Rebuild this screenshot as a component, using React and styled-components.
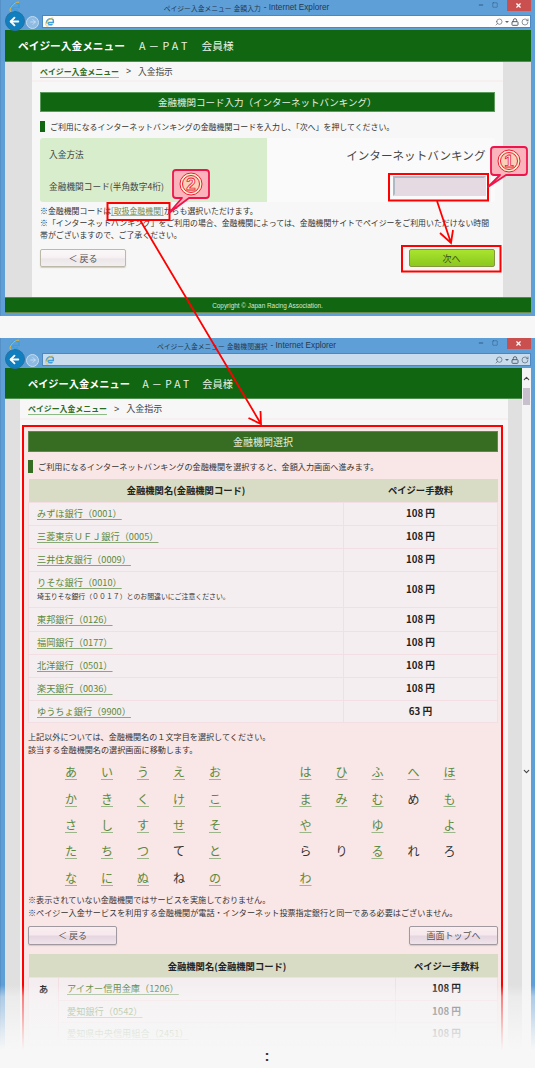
import React from "react";
import styled, { createGlobalStyle } from "styled-components";
import { Search, Lock, RotateCw, ChevronUp, ChevronDown, Minus, Square, X, ArrowLeft, ArrowRight } from "lucide-react";

const Global = createGlobalStyle`
  html, body { margin: 0; padding: 0; background: #f7f7f7; }
  * { box-sizing: border-box; }
  body { font-family: "Noto Sans CJK JP", "Liberation Sans", sans-serif; color: #333; }
`;
const LATIN = `"Liberation Sans", "Noto Sans CJK JP", sans-serif`;

const Page = styled.div`
  position: relative; width: 535px; height: 1068px; overflow: hidden; background: #f7f7f7;
`;
const Win = styled.section`
  background: #5f9fd7;
  margin-top: ${p => p.$top}px;
  height: ${p => p.$h}px;
  padding: 0 4.5px ${p => p.$pb}px;
  display: flex; flex-direction: column; overflow: hidden;
  box-shadow: inset 1px 0 0 #5590c6;
`;
const TitleBar = styled.div`
  height: 15px; position: relative; flex: none; display: flex; align-items: center; justify-content: center; gap: 3px;
  padding-right: 42px; font-size: 8.2px; color: #26394d; font-family: ${LATIN};
`;
const TitleJa = styled.span`font-size: 6.8px;`;
const IeTitle = styled.span`position: absolute; left: 4px; top: 1px; line-height: 0;`;
const Controls = styled.div`
  position: absolute; right: 0; top: 0; display: flex; align-items: flex-start; color: #25476a; gap: 6px;
`;
const CtlIcon = styled.span`width: 8px; height: 10px; display: flex; align-items: center; justify-content: center;`;
const Close = styled.span`
  width: 24px; height: 11px; background: #c9504f; color: #fff; display: flex; align-items: center; justify-content: center; margin-left: 2px;
`;
const AddrRow = styled.div`
  height: 15px; flex: none; display: flex; align-items: flex-start; position: relative; padding-left: 37.5px;
`;
const Back = styled.span`
  position: absolute; left: 0px; top: -4px; width: 20px; height: 20px; border-radius: 50%;
  background: #0f7fbf; border: 1px solid #2b6f9f; color: #fff; display: flex; align-items: center; justify-content: center; z-index: 2;
`;
const Fwd = styled.span`
  position: absolute; left: 21.5px; top: 0.5px; width: 13px; height: 13px; border-radius: 50%;
  background: #8dbbe3; border: 1px solid #c3dcf0; color: #dcecf8; display: flex; align-items: center; justify-content: center;
`;
const Addr = styled.div`
  flex: 1; height: 13px; background: ${p => p.$bg}; border: 1px solid #4d87bd; display: flex; align-items: center;
  padding: 0 1px 0 2px; gap: 2px; color: #58646f;
`;
const Spacer = styled.span`flex: 1;`;
const Caret = styled.span`width: 0; height: 0; border: 2px solid transparent; border-top: 2.5px solid #58646f; margin-top: 2px;`;

const Header = styled.header`
  flex: none; height: ${p => p.$h}px; background: #116611; color: #fff; display: flex; align-items: center;
  padding-left: ${p => p.$pad}px; font-size: ${p => p.$fs}px; border-bottom: 1px solid #4d8f4d;
`;
const Brand = styled.b`font-weight: 700; margin-right: ${p => p.$mr}px;`;
const Pat = styled.span`letter-spacing: ${p => p.$ls}px; margin-right: ${p => p.$mr}px; color: #e8f2e8;`;
const Member = styled.span`color: #e8f2e8;`;

const Gutter = styled.div`
  flex: 1; min-height: 0; background: #e0e0e0; padding: 0 ${p => p.$r}px 0 ${p => p.$l}px; display: flex;
`;
const Center = styled.main`flex: 1; min-width: 0; background: #f7f7f7;`;
const Crumbs = styled.nav`
  height: ${p => p.$h}px; display: flex; align-items: center; gap: 7px; padding-left: ${p => p.$pad}px;
  border-bottom: 2px solid #f6f0f1; font-size: ${p => p.$fs}px; color: #444;
`;
const CrumbLink = styled.a`
  font-size: 7.9px; font-weight: 700; color: #2c6b22; text-decoration: underline; text-decoration-color: #8dbb85; text-underline-offset: 2px;
`;
const Sep = styled.span`font-family: ${LATIN};`;

const Inner1 = styled.div`padding: 10px 8px 0;`;
const Band = styled.h2`
  margin: 0; height: ${p => p.$h}px; background: ${p => p.$bg}; color: #e6efe0; font-weight: 400; font-size: ${p => p.$fs}px;
  display: flex; align-items: center; justify-content: center; border: 1px solid ${p => p.$line};
`;
const Lead = styled.p`
  margin: ${p => p.$mt}px 0 ${p => p.$mb}px; height: ${p => p.$h}px; display: flex; align-items: center; gap: ${p => p.$gap}px;
  font-size: ${p => p.$fs}px; color: #333;
  &::before { content: ""; width: 5px; height: 100%; background: ${p => p.$bar}; flex: none; }
`;
const Form = styled.div`
  display: grid; grid-template-columns: 227px 1fr; grid-template-rows: 33px 31px; background: #fafafa; border-radius: 3px; overflow: hidden;
`;
const FormLabel = styled.div`
  background: #d8edcc; display: flex; align-items: center; padding-left: 9px; font-size: 8.7px; color: #444;
`;
const FormValue = styled.div`
  display: flex; align-items: center; justify-content: flex-end; padding-right: 9px; font-size: 11.6px; color: #444;
`;
const CodeInput = styled.input`
  width: 93px; height: 20px; margin-top: -2px; background: #e5d9e2; border: 2px solid #e5d9e2;
  border-top-color: #aeb9c6; border-left-color: #aeb9c6; padding: 0;
`;
const Notes = styled.div`font-size: 7.9px; line-height: 12px; color: #333; margin-top: ${p => p.$mt}px;`;
const InstLink = styled.a`color: #6f8c4f; text-decoration: underline; text-decoration-color: #a8b890;`;
const BtnRow = styled.div`display: flex; justify-content: space-between; margin-top: ${p => p.$mt}px;`;
const Btn = styled.button`
  font: inherit; font-size: 9px; width: ${p => p.$w}px; height: ${p => p.$h}px; padding: 0; color: #555;
  text-align: center;
  border: 1px solid #bcb9a8; border-radius: 2px;
  background: linear-gradient(#fbf8f8 0%, #f6f0f2 50%, #ece6e8 55%, #f3eff0 100%);
  box-shadow: 0 1px 1px #d0ccc0;
`;
const PinkBtn = styled(Btn)`
  border-color: #a09aa0; color: #555;
  background: linear-gradient(#f9eef0 0%, #f6e8ec 45%, #e5d6df 55%, #f0e4ea 100%);
`;
const GoBtn = styled.button`
  font: inherit; font-size: 9px; width: 86px; height: 18px; padding: 0; color: #35541c; border: 1px solid #85983f; border-radius: 2px;
  background: linear-gradient(#a8e42e, #8cc81e);
`;
const Footer = styled.footer`
  flex: none; height: 16px; background: #116611; color: #d8e8d8; font-family: ${LATIN}; font-size: 6.4px;
  display: flex; align-items: center; justify-content: center; border-top: 1px solid #4d8f4d; border-bottom: 1px solid #6b8b50;
`;

const Viewport = styled.div`flex: 1; min-height: 0; display: flex;`;
const Main = styled.div`flex: 1; min-width: 0; display: flex; flex-direction: column;`;
const Scroll = styled.aside`
  width: 8.5px; flex: none; background: #f4f4f4; display: flex; flex-direction: column; align-items: center; color: #444;
`;
const ScrollUp = styled.span`height: 20px; display: flex; align-items: center; line-height: 0;`;
const Thumb = styled.span`width: 7px; height: 17px; background: #c8c0cc; flex: none;`;
const ScrollDown = styled.span`margin-top: 362px; line-height: 0;`;

const Panel = styled.div`
  margin: 5px 5px 0 2.5px; border: 2px solid #f00; border-bottom: 0; background: #f9e6e6; padding: 4px 2.5px 0 4px; height: 800px;
`;
const Table = styled.table`
  width: 100%; border-collapse: collapse; table-layout: fixed; font-size: 9.2px;
`;
const Col = styled.col`width: ${p => p.$w}px;`;
const Head = styled.th`
  background: #d9dcc4; height: 23px; padding: 0; font-size: 9.3px; font-weight: 700; color: #222; text-align: center;
`;
const HeadName = styled(Head)`padding-left: 30px;`;
const Row = styled.tr`height: ${p => p.$h}px;`;
const NameCell = styled.td`
  background: #f5eef0; border: 1px solid #f3dfe3; padding: 0 0 0 8px; line-height: 11px;
`;
const Letter = styled.td`
  background: #f5eef0; border: 1px solid #f3dfe3; text-align: center; vertical-align: top; padding-top: 4px; font-size: 9.5px; font-weight: 700; color: #222;
`;
const FeeCell = styled.td`
  background: #f5eef0; border: 1px solid #f3dfe3; text-align: center; font-weight: 700; font-size: 9.7px; color: #222; padding: 0 0 1px;
`;
const BankLink = styled.a`
  color: #5b8a3c; text-decoration: underline; text-decoration-color: #8aa877; text-underline-offset: 2px;
`;
const Caution = styled.div`font-size: 6.9px; color: #333; margin-top: 3px;`;
const Plain = styled.div`font-size: 8.12px; line-height: 13px; color: #333; margin-top: ${p => p.$mt}px;`;
const Kana = styled.div`
  display: grid; grid-template-columns: repeat(5, 36px) 54.5px repeat(5, 36px); grid-auto-rows: 26.4px;
  margin: 3px 0 0 25px; font-size: 12px; text-align: center; align-items: center;
`;
const KanaLink = styled.a`
  color: #5b8a3c; text-decoration: underline; text-decoration-color: #9db58a; text-underline-offset: 2px;
`;
const KanaPlain = styled.span`color: #333;`;
const Table2 = styled(Table)`margin-top: 9px;`;

const Overlay = styled.svg`position: absolute; left: 0; top: 0; pointer-events: none;`;
const Fade = styled.div`
  position: absolute; left: 0; right: 0; top: 985px; height: 65px;
  background: linear-gradient(rgba(247,247,247,0) 0%, rgba(247,247,247,.5) 18%, rgba(247,247,247,.62) 38%, rgba(247,247,247,.85) 72%, #f7f7f7 100%);
`;
const Dots = styled.div`
  position: absolute; left: 260px; width: 14px; top: 1046px; text-align: center; font-size: 15px; line-height: 20px; font-weight: 700; color: #333; font-family: ${LATIN};
`;

const IeLogo = ({ s = 11 }) => (
  <svg width={s} height={s} viewBox="0 0 24 24" fill="none">
    <path d="M3 15C3 8 9 3.5 16 4.5c3 .5 4.5 3 4 6.5v2H7.5" stroke="#3c9fe0" strokeWidth="3.4" />
    <path d="M7 13c0 5 6 7.500 11 4" stroke="#3c9fe0" strokeWidth="3.4" />
    <path d="M20 2.500C14 1 4 9 2 17c-1 5 3 6 8 3.500" stroke="#f0b92c" strokeWidth="1.800" />
  </svg>
);

const FlipSearch = styled(Search)`transform: scaleX(-1);`;

const Chrome = ({ title, addr }) => (
  <>
    <TitleBar>
      <IeTitle><IeLogo s={12} /></IeTitle>
      <TitleJa>{title}</TitleJa>
      <span>- Internet Explorer</span>
      <Controls>
        <CtlIcon><Minus size={6} strokeWidth={3} /></CtlIcon>
        <CtlIcon><Square size={6} strokeWidth={1.5} /></CtlIcon>
        <Close><X size={7} strokeWidth={4} /></Close>
      </Controls>
    </TitleBar>
    <AddrRow>
      <Back><ArrowLeft size={13} strokeWidth={3.4} /></Back>
      <Fwd><ArrowRight size={8} strokeWidth={2} /></Fwd>
      <Addr $bg={addr}>
        <IeLogo s={10} />
        <Spacer />
        <FlipSearch size={8} strokeWidth={2} />
        <Caret />
        <Lock size={8} strokeWidth={3} />
        <RotateCw size={8} strokeWidth={2} />
      </Addr>
    </AddrRow>
  </>
);

const banks = [
  ["みずほ銀行（0001）", 23], ["三菱東京ＵＦＪ銀行（0005）", 23], ["三井住友銀行（0009）", 23],
  ["りそな銀行（0010）", 36, "埼玉りそな銀行（００１７）とのお間違いにご注意ください。"],
  ["東邦銀行（0126）", 24], ["福岡銀行（0177）", 23], ["北洋銀行（0501）", 23], ["楽天銀行（0036）", 23], ["ゆうちょ銀行（9900）", 22, null, "63 円"],
];
const K = ({ c, plain }) => c === " " ? <span /> : plain ? <KanaPlain>{c}</KanaPlain> : <KanaLink>{c}</KanaLink>;
const row = (left, right) => [...left.map(([c, p], i) => <K key={"l" + i} c={c} plain={p} />), <span key="g" />, ...right.map(([c, p], i) => <K key={"r" + i} c={c} plain={p} />)];
const L = s => [...s].map(c => [c, false]);
const kanaRows = [
  [L("あいうえお"), L("はひふへほ")],
  [L("かきくけこ"), [...L("まみむ"), ["め", true], ["も", false]]],
  [L("さしすせそ"), L("や ゆ よ")],
  [[...L("たちつ"), ["て", true], ["と", false]], [["ら", true], ["り", true], ["る", false], ["れ", true], ["ろ", true]]],
  [[...L("なにぬ"), ["ね", true], ["の", false]], [["わ", false], [" ", true], [" ", true], [" ", true], [" ", true]]],
];

const Callout = ({ x, y, tail, n }) => (
  <g>
    <path
      d={`M${x + 3} ${y}h30a3 3 0 0 1 3 3v22a3 3 0 0 1 -3 3h-${tail.w}L${tail.x} ${tail.y}L${tail.bx} ${y + 28}h-${tail.bx - x - 3}a3 3 0 0 1 -3 -3v-22a3 3 0 0 1 3 -3z`}
      fill="#fbb4bc" stroke="#f0144c" strokeWidth="1.800" strokeLinejoin="round"
    />
    <circle cx={x + 18} cy={y + 14} r="11" fill="#fdf0c8" stroke="#e8203c" strokeWidth="1" />
    <circle cx={x + 18} cy={y + 14} r="8.500" fill="#fbd0b8" stroke="#e8203c" strokeWidth="1" />
    <text x={x + 18} y={y + 20} textAnchor="middle" fontSize="17" fontWeight="700" fontFamily="Liberation Sans, sans-serif" fill="#fdf0c8" stroke="#e8203c" strokeWidth=".8">{n}</text>
  </g>
);

export default function App() {
  return (
    <Page>
      <Global />
      <Win $top={0} $h={316} $pb={3}>
        <Chrome title="ペイジー入金メニュー 金額入力" addr="#fdfdfd" />
        <Header $h={32} $pad={13.5} $fs={10.7}>
          <Brand $mr={14}>ペイジー入金メニュー</Brand>
          <Pat $ls={3.2} $mr={11}>A－PAT</Pat>
          <Member>会員様</Member>
        </Header>
        <Gutter $l={27.5} $r={28}>
          <Center>
            <Crumbs $h={20} $pad={8} $fs={8.7}>
              <CrumbLink>ペイジー入金メニュー</CrumbLink><Sep>&gt;</Sep><span>入金指示</span>
            </Crumbs>
            <Inner1>
              <Band $h={20} $bg="#116611" $line="#5a9a5a" $fs={9.5}>金融機関コード入力（インターネットバンキング）</Band>
              <Lead $fs={7.93} $mt={9} $mb={6} $h={11} $gap={5} $bar="#116611">ご利用になるインターネットバンキングの金融機関コードを入力し、「次へ」を押してください。</Lead>
              <Form>
                <FormLabel>入金方法</FormLabel>
                <FormValue>インターネットバンキング</FormValue>
                <FormLabel>金融機関コード(半角数字4桁)</FormLabel>
                <FormValue><CodeInput /></FormValue>
              </Form>
              <Notes $mt={3}>
                ※金融機関コードは<InstLink>[取扱金融機関]</InstLink>からも選択いただけます。<br />
                ※「インターネットバンキング」をご利用の場合、金融機関によっては、金融機関サイトでペイジーをご利用いただけない時間<br />
                帯がございますので、ご了承ください。
              </Notes>
              <BtnRow $mt={8}>
                <Btn $w={86} $h={18}>＜ 戻る</Btn>
                <GoBtn>次へ</GoBtn>
              </BtnRow>
            </Inner1>
          </Center>
        </Gutter>
        <Footer>Copyright © Japan Racing Association.</Footer>
      </Win>

      <Win $top={22} $h={712} $pb={0}>
        <Chrome title="ペイジー入金メニュー 金融機関選択" addr="#c8dcee" />
        <Viewport>
          <Main>
            <Header $h={31} $pad={23.5} $fs={10.2}>
              <Brand $mr={12.5}>ペイジー入金メニュー</Brand>
              <Pat $ls={3.2} $mr={10}>A－PAT</Pat>
              <Member>会員様</Member>
            </Header>
            <Gutter $l={15} $r={14.5}>
              <Center>
                <Crumbs $h={21} $pad={8.5} $fs={9}>
                  <CrumbLink>ペイジー入金メニュー</CrumbLink><Sep>&gt;</Sep><span>入金指示</span>
                </Crumbs>
                <Panel>
                  <Band $h={21} $bg="#366d22" $line="#5d8a4c" $fs={10}>金融機関選択</Band>
                  <Lead $fs={8.14} $mt={8} $mb={6} $h={13} $gap={5} $bar="#366d22">ご利用になるインターネットバンキングの金融機関を選択すると、金額入力画面へ進みます。</Lead>
                  <Table>
                    <colgroup><Col $w={315} /><Col /></colgroup>
                    <thead><tr><Head>金融機関名(金融機関コード)</Head><Head>ペイジー手数料</Head></tr></thead>
                    <tbody>
                      {banks.map(([n, h, c, fee]) => (
                        <Row key={n} $h={h}>
                          <NameCell>
                            <BankLink>{n}</BankLink>
                            {c && <Caution>{c}</Caution>}
                          </NameCell>
                          <FeeCell>{fee || "108 円"}</FeeCell>
                        </Row>
                      ))}
                    </tbody>
                  </Table>
                  <Plain $mt={7}>上記以外については、金融機関名の１文字目を選択してください。<br />該当する金融機関名の選択画面に移動します。</Plain>
                  <Kana>{kanaRows.map(([l, r], i) => <React.Fragment key={i}>{row(l, r)}</React.Fragment>)}</Kana>
                  <Plain $mt={3}>※表示されていない金融機関ではサービスを実施しておりません。<br />※ペイジー入金サービスを利用する金融機関が電話・インターネット投票指定銀行と同一である必要はございません。</Plain>
                  <BtnRow $mt={7}>
                    <PinkBtn $w={89} $h={19}>＜ 戻る</PinkBtn>
                    <PinkBtn $w={89} $h={19}>画面トップへ</PinkBtn>
                  </BtnRow>
                  <Table2>
                    <colgroup><Col $w={30} /><Col $w={337} /><Col /></colgroup>
                    <thead><tr><HeadName colSpan={2}>金融機関名(金融機関コード)</HeadName><Head>ペイジー手数料</Head></tr></thead>
                    <tbody>
                      <Row $h={23}><Letter rowSpan={3}>あ</Letter><NameCell><BankLink>アイオー信用金庫（1206）</BankLink></NameCell><FeeCell>108 円</FeeCell></Row>
                      <Row $h={22}><NameCell><BankLink>愛知銀行（0542）</BankLink></NameCell><FeeCell>108 円</FeeCell></Row>
                      <Row $h={22}><NameCell><BankLink>愛知県中央信用組合（2451）</BankLink></NameCell><FeeCell>108 円</FeeCell></Row>
                    </tbody>
                  </Table2>
                </Panel>
              </Center>
            </Gutter>
          </Main>
          <Scroll>
            <ScrollUp><ChevronUp size={9} strokeWidth={3} /></ScrollUp>
            <Thumb />
            <ScrollDown><ChevronDown size={9} strokeWidth={3} /></ScrollDown>
          </Scroll>
        </Viewport>
      </Win>

      <Overlay width="535" height="1068" viewBox="0 0 535 1068" fill="none">
        <g stroke="#f00" strokeWidth="2">
          <rect x="389" y="174" width="99" height="26.500" />
          <rect x="402" y="246" width="98.500" height="25.500" />
          <rect x="107.500" y="203" width="62" height="17" />
          <path d="M437 201L451 243M440 233L451 243L453 230" strokeWidth="1.800" />
          <path d="M140 220L261 424M248.500 418L261 424L260.500 411" strokeWidth="1.800" />
        </g>
        <Callout x={491} y={147} n="1" tail={{ x: 488, y: 187, bx: 500, w: 18 }} />
        <Callout x={173} y={170} n="2" tail={{ x: 169, y: 213, bx: 182, w: 17 }} />
      </Overlay>
      <Fade />
      <Dots>:</Dots>
    </Page>
  );
}
